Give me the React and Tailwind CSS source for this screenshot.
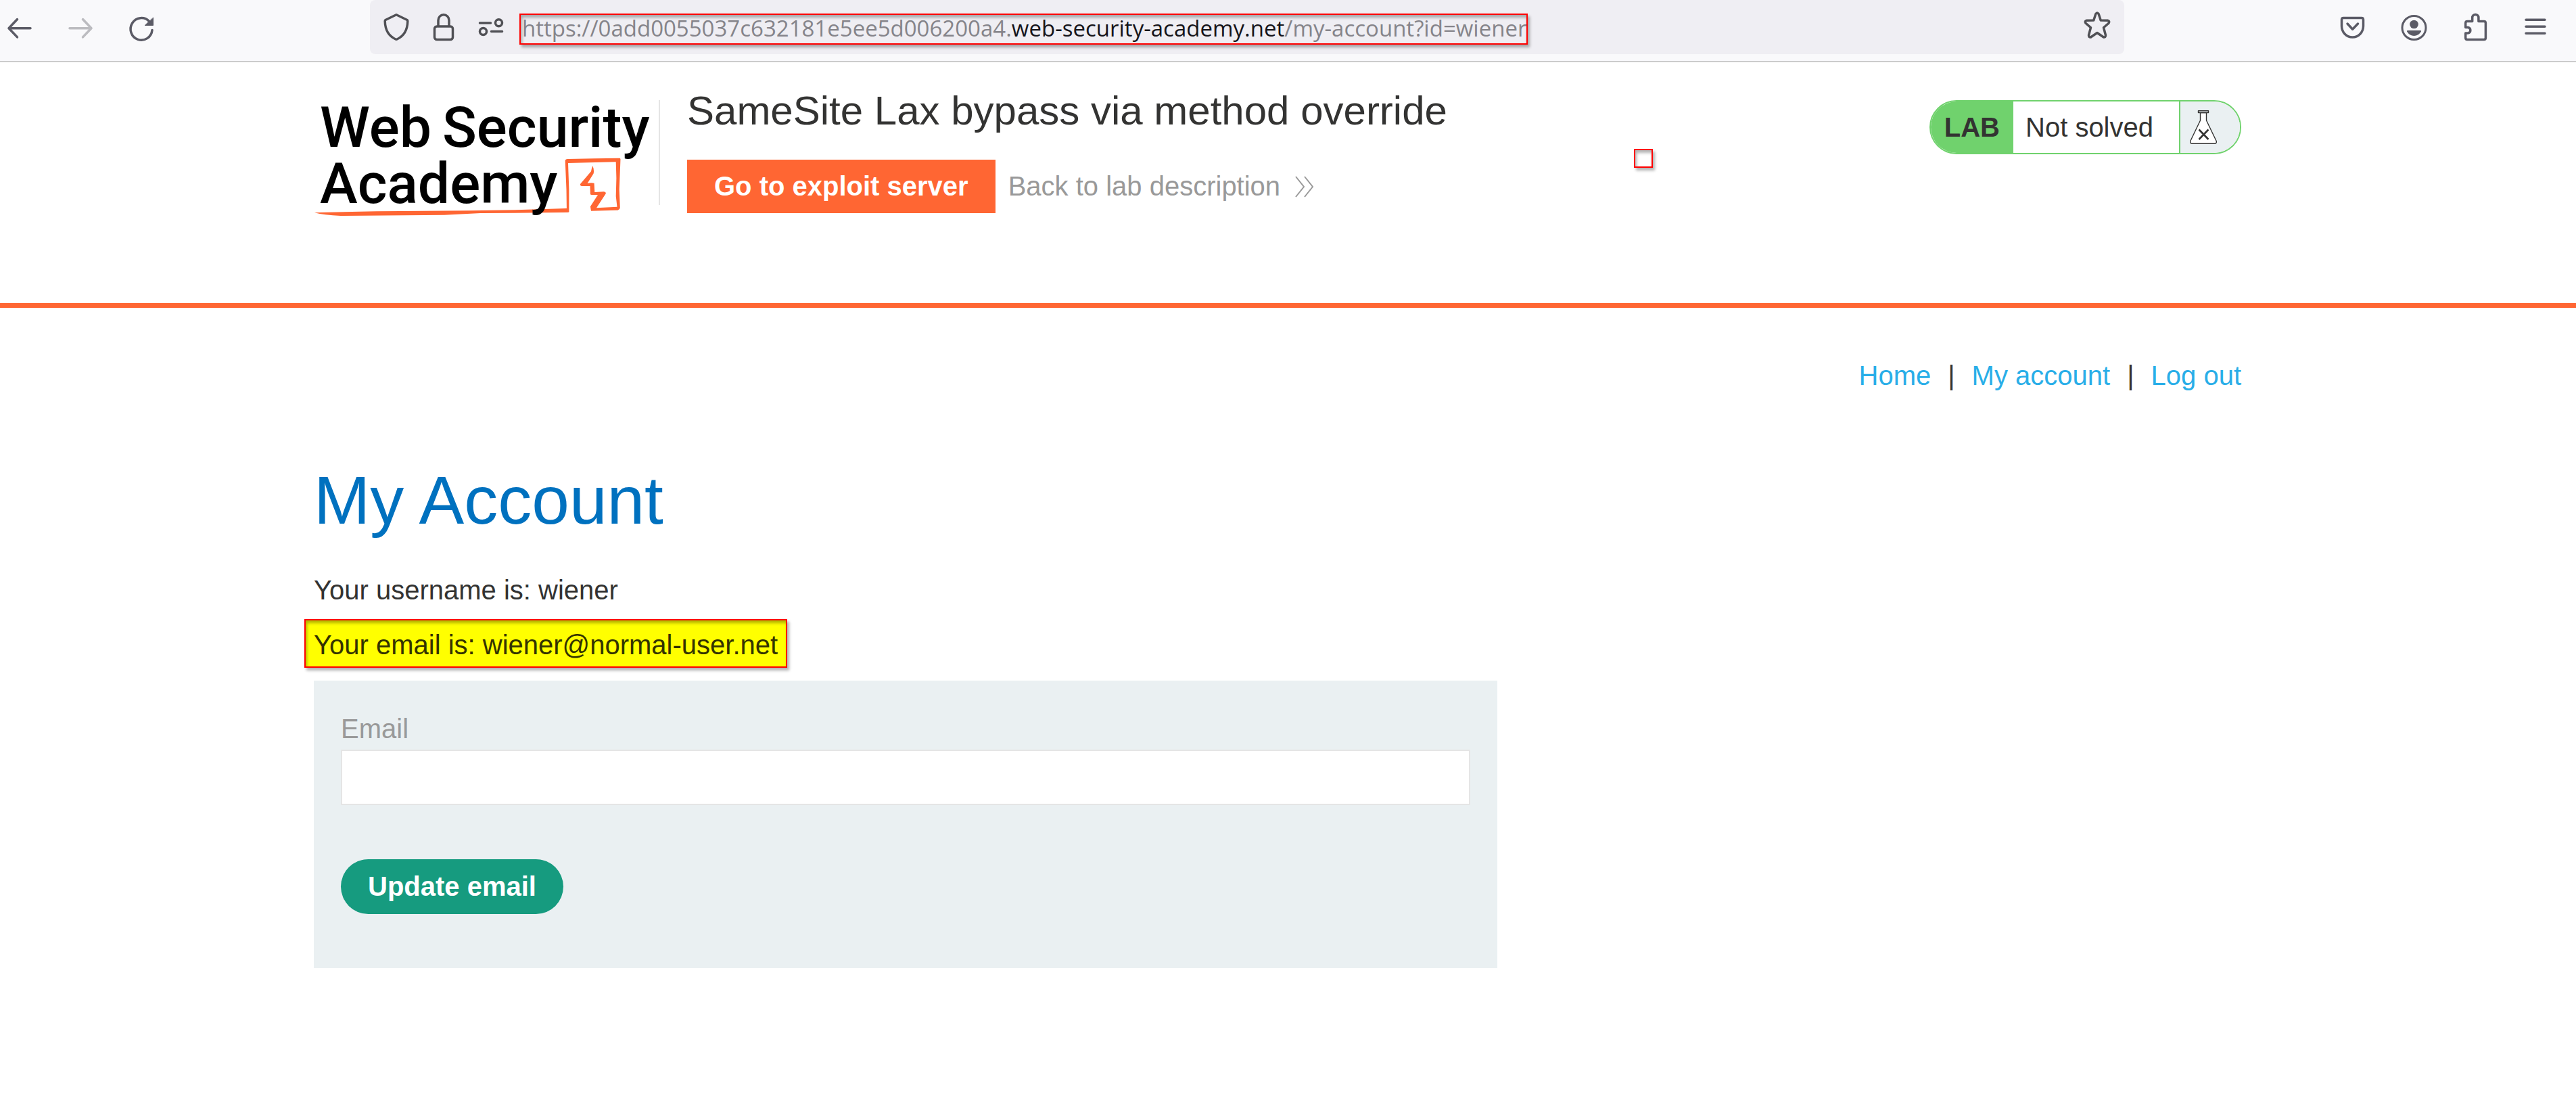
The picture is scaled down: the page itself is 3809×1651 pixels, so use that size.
const ARIAL = "font-['Liberation_Sans',Arial,sans-serif]";
const MARK_SHADOW =
  "shadow-[3px_4px_4px_rgba(0,0,0,0.3),inset_2px_4px_4px_rgba(0,0,0,0.3)]";

function ToolIcon({ label, className = "text-[#5b5b66]", children }) {
  return (
    <button type="button" aria-label={label} className={`shrink-0 ${className}`}>
      <svg
        viewBox="0 0 40 40"
        className="block size-10 overflow-visible"
        fill="none"
        stroke="currentColor"
        strokeWidth="3.5"
        strokeLinecap="round"
        strokeLinejoin="round"
      >
        {children}
      </svg>
    </button>
  );
}

function BrowserBar() {
  return (
    <div className="flex h-[92px] items-start border-b-2 border-[#cccccc] bg-[#f9f9fb] pr-10 pl-[9px]">
      <div className="flex h-20 items-center gap-[50px]">
        <ToolIcon label="Back">
          <path d="M36 21.7H4M16.5 8.5L4 21.7l12.500 13.200" />
        </ToolIcon>
        <ToolIcon label="Forward" className="text-[#bcbcc0]">
          <path d="M4 21.700H36M23.500 8.500L36 21.700l-12.500 13.200" />
        </ToolIcon>
        <ToolIcon label="Reload">
          <path d="M36 24.500A16 16.300 0 1 1 31.500 11.500" />
          <path d="M37.500 6.500V17.500H25.500z" fill="currentColor" strokeWidth="1" />
        </ToolIcon>
      </div>
      <div className="mx-[318px] flex h-20 min-w-0 flex-1 items-center rounded-lg bg-[#efeef3] pr-5 pl-[19px]">
        <div className="flex items-center gap-[30px]">
          <ToolIcon label="Tracking protection" className="text-[#505055]">
            <path d="M20 1.700L36 9.500q.8.500.8 1.800C36.500 24 32 33 21 38q-1 .5-2 0C8 33 3.500 24 3.200 11.300q0-1.300.8-1.800z" />
          </ToolIcon>
          <ToolIcon label="Site information" className="text-[#505055]">
            <rect x="6.500" y="19" width="27" height="19.500" rx="3.500" />
            <path d="M12 18.500V10a8 8.300 0 0 1 16 0v8.500" />
          </ToolIcon>
          <ToolIcon label="Permissions" className="text-[#505055]">
            <path d="M3.500 14h16M20.500 26.400h16" />
            <circle cx="31.500" cy="13.700" r="5" />
            <circle cx="8.500" cy="26.400" r="5" />
          </ToolIcon>
        </div>
        <div
          className={`mt-1.5 ml-[22px] border-2 border-[#ff0000] pb-0.5 pl-0.5 font-['Open_Sans','Noto_Sans',sans-serif] text-[33px] leading-10 whitespace-nowrap text-[#85848a] ${MARK_SHADOW}`}
        >
          https://0add0055037c632181e5ee5d006200a4.
          <span className="text-[#15141a]">web-security-academy.net</span>
          /my-account?id=wiener
        </div>
        <div className="ml-auto">
          <ToolIcon label="Bookmark this page" className="text-[#505055]">
            <path d="M17.800 3.800q2.200-3.500 4.400 0l3 9.200 10.300.3q3.500.7 1.500 4l-7.500 6.500 3 11.200q0 3.500-3 3L20 31.500 10.500 38q-3 .5-3-3l3-11.200L3 17.300q-2-3.300 1.500-4l10.300-.3z" />
          </ToolIcon>
        </div>
      </div>
      <div className="flex h-20 items-center gap-[50px]">
        <ToolIcon label="Save to Pocket">
          <path d="M3.500 9q0-2.500 2.500-2.500h27q2.500 0 2.500 2.500v9.500a16 16.500 0 0 1-32 0z" />
          <path d="M12 15l7.600 8.200L27.500 15" />
        </ToolIcon>
        <ToolIcon label="Account">
          <circle cx="20.500" cy="21" r="17.500" strokeWidth="3" />
          <circle cx="20.500" cy="16" r="6.300" fill="currentColor" stroke="none" />
          <path d="M11 25h19q1.700 0 1 1.500-3.500 6.500-10.500 6.500T10 26.500q-.7-1.500 1-1.500z" fill="currentColor" stroke="none" />
        </ToolIcon>
        <ToolIcon label="Extensions">
          <path d="M6.700 20.500V14q0-2.500 2.500-2.500h7.500V6a4.600 4.600 0 0 1 9.200 0v5.500h8q2.500 0 2.500 2.500v22q0 2.500-2.500 2.500H9.200q-2.500 0-2.500-2.500v-7h3.500a4.300 4.300 0 0 0 0-8.500z" />
        </ToolIcon>
        <ToolIcon label="Menu">
          <path d="M6 9.300h28M6 19.300h28M6 29.300h28" />
        </ToolIcon>
      </div>
    </div>
  );
}

function Logo() {
  return (
    <svg
      viewBox="0 0 510 172"
      role="img"
      aria-label="Web Security Academy"
      className="block h-[172px] w-[510px] shrink-0 overflow-visible"
    >
      <path
        fill="#ff6633"
        d="M1 166.300Q15 170 39.600 171L193 169.700L246.700 167L321.700 166.500L375 166Q378 166 377.400 163.700L377.400 132L376 93L446.700 91.300L447.400 115.300L446.700 142L448.500 157.700L418 159.300L431.400 138.700Q433 136 428.900 135.300L415.300 136L414.600 122.700Q410 121.500 404.600 123L413.500 108.700Q415 104 412.400 97Q411 100 410 105.300L394.200 123.700Q393 126 396 127L408.500 127L408.900 138.700Q409 140 411 140L420 140L408.900 157.300L410 163.700L449.600 162.700Q453 161 452.800 158.700L451.700 132L453.500 87Q453 85.700 451.700 85.700L414.600 86.300L375.300 87Q372 87.300 371.700 89.300L373.500 132L373.900 160L307.400 162L232.400 163.300L93 164.300z"
      />
      <g className="font-['Roboto',sans-serif] text-[84px] font-medium" fill="#000">
        <text x="9" y="69">Web</text>
        <text x="190" y="69">Security</text>
        <text x="9" y="152">Academy</text>
      </g>
    </svg>
  );
}

function LabStatus() {
  return (
    <div className="flex h-20 items-stretch overflow-hidden rounded-[40px] border-2 border-[#70d26d] text-[40px] leading-[76px] text-[#333332]">
      <p className="bg-[#70d26d] px-5 font-bold">LAB</p>
      <p className="bg-white pr-[38px] pl-[18px]">Not solved</p>
      <span className="flex w-[90px] items-center border-l-2 border-[#70d26d] bg-[#eaf0f2] pl-3.5">
        <svg viewBox="0 0 40 50" className="h-[50px] w-10 overflow-visible" fill="#fff" stroke="#333332" strokeWidth="1.400" strokeLinejoin="round">
          <path d="M15.500 3.500V15L.800 45.500Q0 49 3 49.300H37Q40 49 39.200 45.500L24.500 15V3.500z" />
          <path d="M12.500.800h15v2.700h-15z" fill="#eaf0f2" />
          <path d="M13.500 28.500L27.500 43M27.500 28.500L13.500 43" strokeWidth="2.600" />
        </svg>
      </span>
    </div>
  );
}

export default function App() {
  return (
    <div className={`${ARIAL} min-h-screen bg-white text-[#333332]`}>
      <BrowserBar />

      <header className="min-h-[363px] border-b-[7px] border-[#ff6633] pr-[31px]">
        <div className="relative mx-auto flex w-full max-w-[2850px] items-start pt-10">
          <div className="mt-4 flex items-start">
            <Logo />
            <div className="h-[155px] w-0.5 bg-[#e5e5e5]" />
          </div>
          <div className="ml-10">
            <h2 className="text-[60px] leading-[64px] whitespace-nowrap">
              SameSite Lax bypass via method override
            </h2>
            <div className="mt-10 flex items-center gap-[19px] text-[40px] leading-[79px] whitespace-nowrap">
              <a href="#exploit" className="bg-[#ff6633] px-10 font-bold text-white">
                Go to exploit server
              </a>
              <a href="#lab" className="flex items-center gap-[22px] text-[#999999]">
                Back to lab description
                <svg viewBox="0 0 28 32" className="h-8 w-7" fill="none" stroke="currentColor" strokeWidth="2">
                  <path d="M1 1l12 15L1 31M14 1l12 15L14 31" />
                </svg>
              </a>
            </div>
          </div>
          <div className="mt-4 ml-auto">
            <LabStatus />
          </div>
          <div className={`absolute top-32 left-[1952px] size-7 border-2 border-[#ff0000] ${MARK_SHADOW}`} />
        </div>
      </header>

      <main className="pr-[31px] text-[40px] leading-[48px]">
        <div className="mx-auto max-w-[2850px] pt-[76px]">
          <nav className="flex justify-end gap-[25px]">
            <a href="#home" className="text-[#29aee8]">Home</a>
            <span>|</span>
            <a href="#account" className="text-[#29aee8]">My account</a>
            <span>|</span>
            <a href="#logout" className="text-[#29aee8]">Log out</a>
          </nav>
          <h1 className="mt-[100px] text-[100px] leading-[120px] text-[#0071bf]">My Account</h1>
          <p className="mt-[49px]">Your username is: wiener</p>
          <p
            className={`mt-[19px] -ml-3.5 w-fit border-2 border-[#ff0000] bg-[#ffff00] px-3 pt-3 pb-2 text-[#333300] ${MARK_SHADOW}`}
          >
            Your email is: wiener@normal-user.net
          </p>
          <form
            className="mt-[19px] flex max-w-[1750px] flex-col items-start bg-[#eaf0f2] px-10 pt-[47px] pb-20"
            onSubmit={(e) => e.preventDefault()}
          >
            <label htmlFor="email" className="text-[#999999]">Email</label>
            <input
              id="email"
              type="email"
              className="mt-[7px] h-[82px] w-full border-2 border-[#e5e5e5] bg-white px-4 outline-none"
            />
            <button
              type="submit"
              className="mt-20 rounded-full bg-[#169b7f] px-10 text-[40px] leading-[81px] font-bold text-white"
            >
              Update email
            </button>
          </form>
        </div>
      </main>
    </div>
  );
}
